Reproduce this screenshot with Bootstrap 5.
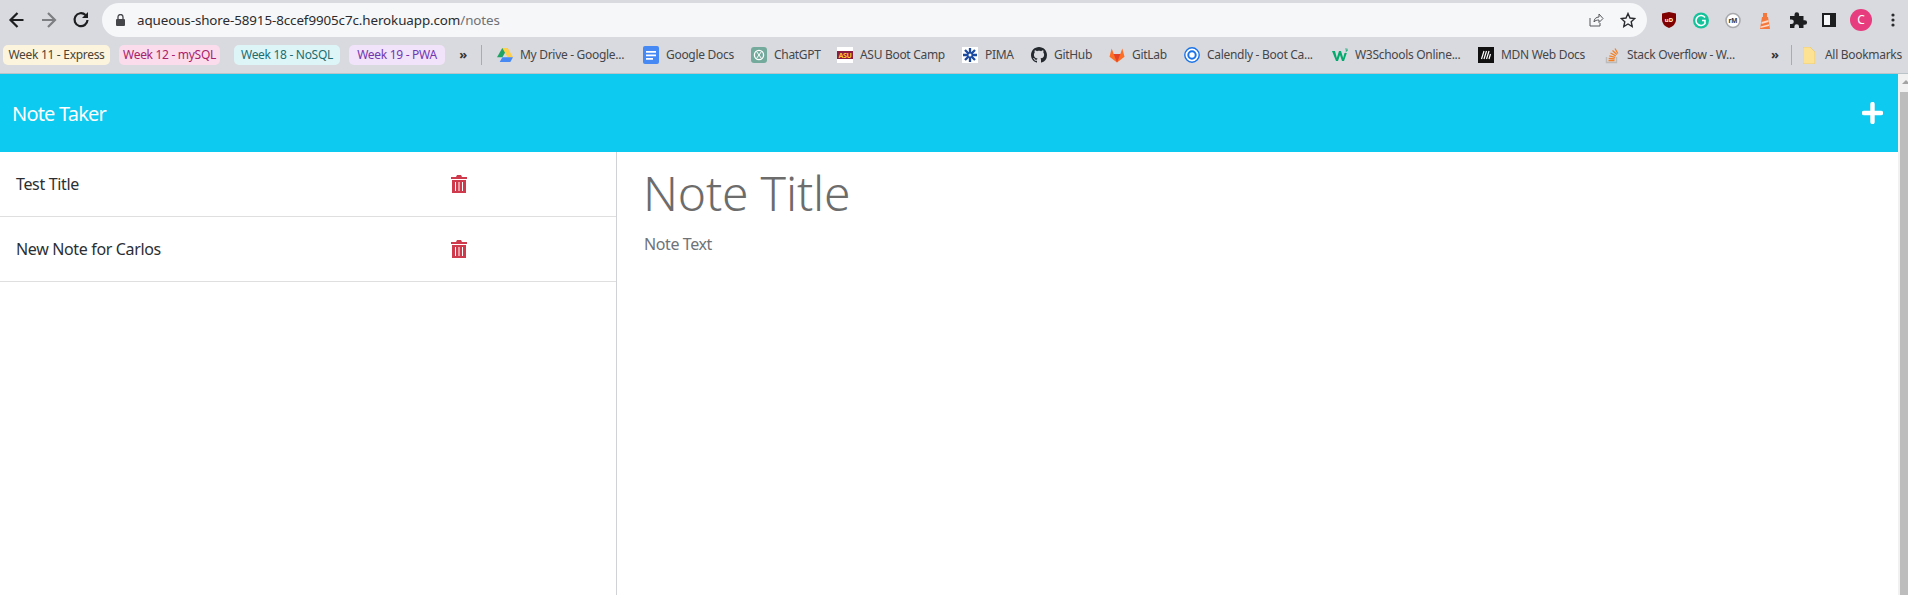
<!DOCTYPE html>
<html lang="en"><head><meta charset="utf-8"><title>Note Taker</title>
<link href="https://cdn.jsdelivr.net/npm/bootstrap@5.3.0/dist/css/bootstrap.min.css" rel="stylesheet">
<style>
html,body{height:595px;overflow:hidden}
body{font-family:"Noto Sans","Open Sans",sans-serif;background:#fff;color:#2b2f33}
.chrome-top{height:41px;background:#d9dadf;padding-top:3px}
.nav-ico{width:32px;flex:none}
.omni{height:34px;width:1545px;background:#f6f7f9;border-radius:17px;margin-left:6px;flex:none;padding-left:14px}
.omni-url{font-size:13.4px;color:#2a2b2e;margin-left:12px;letter-spacing:-.1px}
.omni-url span{color:#6f7175}
.ext{width:32px;flex:none}
.ext-row{height:34px;margin-left:6px}
.avatar-c{width:22px;height:22px;border-radius:50%;background:#e73c7e;color:#fff;font-size:12px}
.bm-wrap{background:#d9dadf;height:33px;padding:4px 0 0 3px;border-bottom:1px solid #b9c3c8;font-size:12px;color:#45464a;letter-spacing:-.3px;white-space:nowrap}
.pill{height:20px;border-radius:5px;flex:none;justify-content:center}
.p1{width:107px;background:#fdf4de;color:#4a4436;margin-right:9px}
.p2{width:101px;background:#fbdcec;color:#a8226b;margin-right:14px}
.p3{width:106px;background:#def5f8;color:#1c6d70;margin-right:9px}
.p4{width:96px;background:#f1e3f9;color:#7236b0}
.chev{width:36px;height:20px;flex:none;justify-content:center;font-weight:700;font-size:13px;color:#333}
.sep{width:1px;height:20px;background:#a9abaf;flex:none}
.gap15{margin-right:15px}
.gap11{margin-right:11px}
.item{flex:none;height:20px;gap:7px}
.w146{width:146px}.w108{width:108px}.w86{width:86px}.w125{width:125px}.w69{width:69px}.w78{width:78px}.w75{width:75px}.w148{width:148px}.w126{width:126px}.w167{width:167px}.w22{width:22px}
.bm-chev2{width:20px;height:20px;flex:none;font-weight:700;font-size:13px;color:#333}
.item svg{flex:none}
.page-wrap{height:521px}
.page-main{flex:1;min-width:0}
.topbar{background:#0dcaf0;height:78px;padding:2px 15px 0 12px}
.plus-ico{margin-top:-2px}
.brand{color:#fff;font-size:20px;letter-spacing:-.8px}
.sidebar{width:617px;flex:none;border-right:1px solid #d0d3d6;height:443px}
.row-note{height:65px;border-bottom:1px solid #dfdfdf;padding-left:16px;font-size:16px;letter-spacing:-.35px}
.row-note span{width:435px;flex:none}
.edit{flex:1;padding:12px 0 0 26px}
.t1{font-size:48px;line-height:58px;font-weight:300;color:#6c6c6c;letter-spacing:-.2px}
.t2{font-size:16px;color:#6f7377;line-height:24px;margin-top:10px;letter-spacing:-.4px;padding-left:1px}
.sb{width:10px;background:#f1f1f1;flex:none;padding-left:2px}
.sb-arrow{height:18px;position:relative}
.sb-arrow::after{content:"";position:absolute;left:2px;top:6px;border:4px solid transparent;border-top:0;border-bottom:4px solid #a3a3a3}
.sb-thumb{height:503px;background:#bdbdbd}
</style></head><body>
<div class="chrome-top d-flex align-items-start">
 <div class="d-flex"><svg class="nav-ico" height="34" viewBox="0 0 32 34"><path d="M23.500 17H11M17.500 10l-7 7 7 7" fill="none" stroke="#1d1e20" stroke-width="2.200"/></svg>
 <svg class="nav-ico" height="34" viewBox="0 0 32 34"><path d="M10 17h12M16 10l7 7-7 7" fill="none" stroke="#7d7e82" stroke-width="2.200"/></svg>
 <svg class="nav-ico" height="34" viewBox="0 0 32 34"><path d="M23.500 17a6.500 6.500 0 1 1-2-5" fill="none" stroke="#1d1e20" stroke-width="2.200"/><path d="M24 9v6h-6z" fill="#1d1e20"/></svg></div>
 <div class="omni d-flex align-items-center"><svg width="9" height="12" viewBox="0 0 9 12"><rect y="5" width="9" height="7" rx="1" fill="#45464a"/><path d="M2 6V3a2.500 2.500 0 0 1 5 0v3" fill="none" stroke="#45464a" stroke-width="1.300"/></svg>
  <span class="omni-url flex-grow-1">aqueous-shore-58915-8ccef9905c7c.herokuapp.com<span>/notes</span></span>
  <svg class="me-3" width="16" height="16" viewBox="0 0 16 16"><path d="M2 6v8h10V11M6 10c0-3 2-5 5-5V2l4 4.500-4 4V8c-2 0-4 .5-5 2z" fill="none" stroke="#55565a" stroke-width="1"/></svg>
  <svg class="gap11" width="16" height="16" viewBox="0 0 16 16"><path d="M8 1.500l2 4.500 4.800.5-3.600 3.200 1 4.800L8 12l-4.200 2.500 1-4.800L1.200 6.500 6 6z" fill="none" stroke="#2a2b2e" stroke-width="1.400"/></svg></div>
 <div class="d-flex align-items-center ext-row">
  <svg class="ext" height="16" viewBox="0 0 32 16"><path d="M9 1.500 16 0l7 1.500V8q0 5-7 8-7-3-7-8z" fill="#800000"/><text x="16" y="10" font-size="6" font-weight="700" fill="#fff" text-anchor="middle">uD</text></svg>
  <svg class="ext" height="17" viewBox="0 0 32 17"><circle cx="16" cy="8.500" r="8" fill="#15c39a"/><path d="M20 5.500a5 5 0 1 0 0 6V8.500h-3" fill="none" stroke="#fff" stroke-width="1.600"/></svg>
  <svg class="ext" height="17" viewBox="0 0 32 17"><circle cx="16" cy="8.500" r="7" fill="#fff" stroke="#a8a9ad" stroke-width="1.600"/><text x="16" y="11" font-size="6.500" font-weight="700" fill="#333" text-anchor="middle">rM</text></svg>
  <svg class="ext" height="17" viewBox="0 0 32 17"><path d="M13 5h6l2 12H11z" fill="#f4783c"/><path d="M14 1h4v4h-4z" fill="#f4783c"/><path d="M12.500 10l7-2v2l-7 2zM11.500 14.500l8.500-2.200v1.800l-8.500 2z" fill="#fdd9c8"/></svg>
  <svg class="ext" height="16" viewBox="0 0 32 16"><path d="M9 4h4.500V2.500a2.300 2.300 0 0 1 4.600 0V4h4.400v4.200h1.300a2.300 2.300 0 0 1 0 4.600h-1.300V16h-4.500v-1.500a2.300 2.300 0 0 0-4.600 0V16H9v-4h1.500a2.300 2.300 0 0 0 0-4.600H9z" fill="#1d1e20"/></svg>
  <svg class="ext" height="14" viewBox="0 0 32 14"><rect x="10" y="1" width="12" height="12" fill="#f6f7f9" stroke="#1d1e20" stroke-width="2"/><rect x="17" y="1" width="6" height="12" fill="#1d1e20"/></svg>
  <div class="ext d-flex justify-content-center"><div class="d-flex align-items-center justify-content-center avatar-c">C</div></div>
  <svg class="ext" height="14" viewBox="0 0 32 14"><circle cx="16" cy="2" r="1.600" fill="#2a2b2e"/><circle cx="16" cy="7" r="1.600" fill="#2a2b2e"/><circle cx="16" cy="12" r="1.600" fill="#2a2b2e"/></svg>
 </div>
</div>
<div class="bm-wrap d-flex align-items-start">
 <div class="pill d-flex align-items-center p1">Week 11 - Express</div>
 <div class="pill d-flex align-items-center p2">Week 12 - mySQL</div>
 <div class="pill d-flex align-items-center p3">Week 18 - NoSQL</div>
 <div class="pill d-flex align-items-center p4">Week 19 - PWA</div>
 <div class="chev d-flex align-items-center">»</div>
 <div class="sep gap15"></div>
 <div class="item d-flex align-items-center w146"><svg width="16" height="14" viewBox="0 0 16 14"><path d="M5.300 0h5.400L5.400 9.300H0z" fill="#1fa463"/><path d="M10.700 0 16 9.300h-5.400L5.300 0z" fill="#ffd04b"/><path d="M2.700 14 5.400 9.300H16L13.300 14z" fill="#4688f4"/></svg>My Drive - Google...</div>
 <div class="item d-flex align-items-center w108"><svg width="16" height="18" viewBox="0 0 16 18"><rect width="16" height="18" rx="2" fill="#4688f4"/><path d="M3 5h10v1.800H3zM3 8.500h10v1.800H3zM3 12h7v1.800H3z" fill="#fff"/></svg>Google Docs</div>
 <div class="item d-flex align-items-center w86"><svg width="16" height="16" viewBox="0 0 16 16"><rect width="16" height="16" rx="3" fill="#74aa9c"/><circle cx="8" cy="8" r="4.600" fill="none" stroke="#fff" stroke-width="1.300"/><path d="M5.500 4.500 10.500 11.500M10.500 4.500 5.500 11.500" stroke="#fff" stroke-width="1"/></svg>ChatGPT</div>
 <div class="item d-flex align-items-center w125"><svg width="16" height="16" viewBox="0 0 16 16"><rect width="16" height="16" fill="#fff"/><rect y="4" width="16" height="8" fill="#8c1d40"/><text x="8" y="11" font-size="7" font-weight="700" fill="#ffc627" text-anchor="middle">ASU</text></svg>ASU Boot Camp</div>
 <div class="item d-flex align-items-center w69"><svg width="16" height="16" viewBox="0 0 16 16"><rect width="16" height="16" fill="#fff"/><path d="M8 1v14M1 8h14M3 3l10 10M13 3 3 13" stroke="#1c4aa0" stroke-width="2.300"/><circle cx="8" cy="8" r="1.500" fill="#fff"/></svg>PIMA</div>
 <div class="item d-flex align-items-center w78"><svg width="16" height="16" viewBox="0 0 16 16"><path d="M8 0C3.580 0 0 3.580 0 8c0 3.540 2.290 6.530 5.470 7.590.4.070.55-.17.55-.38 0-.19-.01-.82-.01-1.490-2.010.37-2.530-.49-2.690-.94-.09-.23-.48-.94-.82-1.130-.28-.15-.68-.52-.01-.53.63-.01 1.080.58 1.230.82.72 1.210 1.870.87 2.330.66.070-.52.28-.87.51-1.070-1.780-.2-3.640-.89-3.640-3.950 0-.87.31-1.590.82-2.150-.08-.2-.36-1.020.08-2.120 0 0 .67-.21 2.200.82.64-.18 1.320-.27 2-.27.68 0 1.360.09 2 .27 1.530-1.040 2.200-.82 2.200-.82.44 1.100.16 1.920.08 2.120.51.56.82 1.270.82 2.150 0 3.070-1.870 3.750-3.650 3.950.29.25.54.73.54 1.480 0 1.070-.01 1.930-.01 2.200 0 .21.15.46.55.38A8.013 8.013 0 0 0 16 8c0-4.420-3.580-8-8-8z" fill="#24292f"/></svg>GitHub</div>
 <div class="item d-flex align-items-center w75"><svg width="16" height="16" viewBox="0 0 16 16"><path d="M8 15.500 .5 9.800 2.700 1.500l2 5.500h6.600l2-5.500 2.200 8.300z" fill="#fc6d26"/><path d="M8 15.500 4.700 7h6.600z" fill="#e24329"/></svg>GitLab</div>
 <div class="item d-flex align-items-center w148"><svg width="16" height="16" viewBox="0 0 16 16"><circle cx="8" cy="8" r="7.200" fill="#fff" stroke="#1a73e8" stroke-width="1.400"/><circle cx="8" cy="8" r="3.700" fill="none" stroke="#1a73e8" stroke-width="2"/></svg>Calendly - Boot Ca...</div>
 <div class="item d-flex align-items-center w146"><svg width="16" height="14" viewBox="0 0 16 14"><path d="M0 3h3l1.800 7L7 3h2l2.200 7L12.500 5h2.300L12 13H10L8 7 6 13H4z" fill="#04aa6d"/><path d="M13 1h2.500L14 2.500h1.500L13.500 4" fill="none" stroke="#04aa6d" stroke-width=".7"/></svg>W3Schools Online...</div>
 <div class="item d-flex align-items-center w126"><svg width="16" height="16" viewBox="0 0 16 16"><rect width="16" height="16" fill="#111"/><path d="M3.500 12 6 4M6 12 8.500 4M8.500 12 11 4M11 12l1.500-5" stroke="#fff" stroke-width="1.200" fill="none"/></svg>MDN Web Docs</div>
 <div class="item d-flex align-items-center w167"><svg width="16" height="18" viewBox="0 0 16 18"><path d="M2.500 11v5.500h10V11" fill="none" stroke="#bcbbbb" stroke-width="1.400"/><path d="M4.500 14.500h6M4.700 12.300l6 .6M5.300 9.800l5.800 1.600M6.500 7l5.300 2.900M8.500 4.500l4.300 4M11 2.500l2.800 5" stroke="#f48024" stroke-width="1.300"/></svg>Stack Overflow - W...</div>
 <div class="bm-chev2 d-flex align-items-center">»</div>
 <div class="sep gap11"></div>
 <div class="item d-flex align-items-center w22"><svg width="12" height="17" viewBox="0 0 12 17"><path d="M1 0h6l5 5v11a1 1 0 0 1-1 1H1a1 1 0 0 1-1-1V1a1 1 0 0 1 1-1z" fill="#fde293" stroke="#e6c568" stroke-width=".6"/></svg></div>
 <div class="item d-flex align-items-center">All Bookmarks</div>
</div>
<div class="d-flex page-wrap">
 <div class="page-main">
  <div class="topbar d-flex align-items-center justify-content-between"><span class="brand">Note Taker</span><svg class="plus-ico" width="21" height="22" viewBox="0 0 21 22"><path d="M10.500 2v18M2 11h17" stroke="#fff" stroke-width="4.400" stroke-linecap="round"/></svg></div>
  <div class="d-flex">
   <div class="sidebar">
    <div class="row-note d-flex align-items-center"><span>Test Title</span><svg width="16" height="18" viewBox="0 0 16 18"><path d="M0 2h5l1-2h4l1 2h5v2H0zM1 5h14v13H1z" fill="#cf3a4c"/><path d="M4.500 7v9M8 7v9M11.500 7v9" stroke="#fff" stroke-width="1"/></svg></div>
    <div class="row-note d-flex align-items-center"><span>New Note for Carlos</span><svg width="16" height="18" viewBox="0 0 16 18"><path d="M0 2h5l1-2h4l1 2h5v2H0zM1 5h14v13H1z" fill="#cf3a4c"/><path d="M4.500 7v9M8 7v9M11.500 7v9" stroke="#fff" stroke-width="1"/></svg></div>
   </div>
   <div class="edit"><div class="t1">Note Title</div><div class="t2">Note Text</div></div>
  </div>
 </div>
 <div class="sb"><div class="sb-arrow"></div><div class="sb-thumb"></div></div>
</div>
</body></html>
